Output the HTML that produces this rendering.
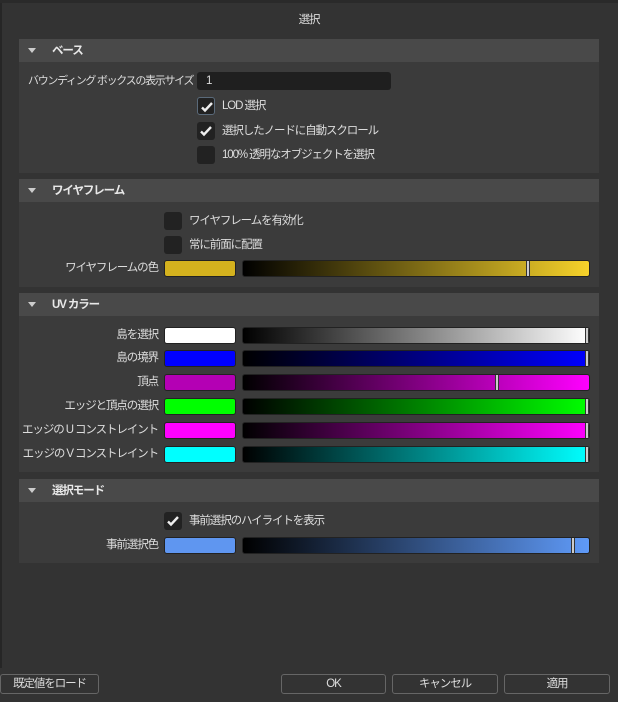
<!DOCTYPE html><html><head><meta charset="utf-8"><style>
*{margin:0;padding:0;box-sizing:border-box}
body{width:618px;height:702px;background:#333;position:relative;overflow:hidden;font-family:"Liberation Sans","Noto Sans CJK JP",sans-serif;font-size:11.5px;letter-spacing:-1.1px;color:#ddd}
.a{position:absolute}
.hd{position:absolute;left:19px;width:580px;background:#494949;height:23px;font-weight:bold;color:#e8e8e8;line-height:24px}
.hd span{position:absolute;left:33px}
.hd i{position:absolute;left:9px;top:9px;width:0;height:0;border-left:4px solid transparent;border-right:4px solid transparent;border-top:5px solid #ccc}
.bd{position:absolute;left:19px;width:580px;background:#3b3b3b}
.cb{position:absolute;width:18px;height:18px;background:#222;border-radius:3px}
.cb svg{position:absolute;left:2px;top:2px}
.lb{position:absolute;line-height:20px;color:#ddd}
.rl{position:absolute;right:460px;text-align:right;line-height:19px;white-space:nowrap}
.sw{position:absolute;left:164px;width:72px;height:17px;border:1px solid #222;border-radius:3px}
.gr{position:absolute;left:242px;width:348px;height:17px;border:1px solid #222;border-radius:3px;overflow:hidden}
.mk{position:absolute;top:0;width:4px;height:15px;background:#ccc;border-left:1px solid #333;border-right:1px solid #333}
.bt{position:absolute;top:674px;height:20px;border:1px solid #666;border-radius:3px;text-align:center;line-height:19px;color:#ddd}
</style></head><body>
<div class="a" style="left:0;top:0;width:618px;height:3px;background:#2a2a2a"></div>
<div class="a" style="left:0;top:3px;width:2px;height:665px;background:#262626"></div>
<div class="a" style="left:0;top:12px;width:618px;text-align:center;line-height:17px">選択</div>

<div class="hd" style="top:39px"><i></i><span>ベース</span></div>
<div class="bd" style="top:62px;height:111px"></div>
<div class="a" style="left:28px;top:72px;line-height:19px;font-size:11px;letter-spacing:-1.3px;white-space:nowrap">バウンディング ボックスの表示サイズ</div>
<div class="a" style="left:197px;top:72px;width:194px;height:18px;background:#1f1f1f;border-radius:3px;padding-left:9px;line-height:19px">1</div>
<div class="cb" style="left:197px;top:97px;border:1px solid #5a6a7a"><svg width="14" height="14" viewBox="0 0 14 14"><path d="M2 7.5l3 3 7-7.5" stroke="#eee" stroke-width="2.4" fill="none"/></svg></div>
<div class="lb" style="left:222px;top:96px">LOD 選択</div>
<div class="cb" style="left:197px;top:122px"><svg width="14" height="14" viewBox="0 0 14 14"><path d="M2 7.5l3 3 7-7.5" stroke="#eee" stroke-width="2.4" fill="none"/></svg></div>
<div class="lb" style="left:222px;top:121px">選択したノードに自動スクロール</div>
<div class="cb" style="left:197px;top:146px"></div>
<div class="lb" style="left:222px;top:145px">100% 透明なオブジェクトを選択</div>

<div class="hd" style="top:179px"><i></i><span>ワイヤフレーム</span></div>
<div class="bd" style="top:202px;height:85px"></div>
<div class="cb" style="left:164px;top:212px"></div>
<div class="lb" style="left:189px;top:211px">ワイヤフレームを有効化</div>
<div class="cb" style="left:164px;top:236px"></div>
<div class="lb" style="left:189px;top:235px">常に前面に配置</div>
<div class="rl" style="top:259px">ワイヤフレームの色</div>
<div class="sw" style="top:260px;background:#d4b21e"></div>
<div class="gr" style="top:260px;background:linear-gradient(90deg,#000,#f6d22a)"><div class="mk" style="left:283px"></div></div>

<div class="hd" style="top:293px"><i></i><span>UV カラー</span></div>
<div class="bd" style="top:316px;height:156px"></div>
<div class="rl" style="top:326px">島を選択</div>
<div class="sw" style="top:327px;background:#fff"></div>
<div class="gr" style="top:327px;background:linear-gradient(90deg,#000,#fff)"><div class="mk" style="left:342px"></div></div>
<div class="rl" style="top:349px">島の境界</div>
<div class="sw" style="top:350px;background:#00f"></div>
<div class="gr" style="top:350px;background:linear-gradient(90deg,#000,#00f)"><div class="mk" style="left:342px"></div></div>
<div class="rl" style="top:373px">頂点</div>
<div class="sw" style="top:374px;background:#b400b4"></div>
<div class="gr" style="top:374px;background:linear-gradient(90deg,#000,#f0f)"><div class="mk" style="left:252px"></div></div>
<div class="rl" style="top:397px">エッジと頂点の選択</div>
<div class="sw" style="top:398px;background:#0f0"></div>
<div class="gr" style="top:398px;background:linear-gradient(90deg,#000,#0f0)"><div class="mk" style="left:342px"></div></div>
<div class="rl" style="top:421px">エッジの U コンストレイント</div>
<div class="sw" style="top:422px;background:#f0f"></div>
<div class="gr" style="top:422px;background:linear-gradient(90deg,#000,#f0f)"><div class="mk" style="left:342px"></div></div>
<div class="rl" style="top:445px">エッジの V コンストレイント</div>
<div class="sw" style="top:446px;background:#0ff"></div>
<div class="gr" style="top:446px;background:linear-gradient(90deg,#000,#0ff)"><div class="mk" style="left:342px"></div></div>

<div class="hd" style="top:479px"><i></i><span>選択モード</span></div>
<div class="bd" style="top:502px;height:61px"></div>
<div class="cb" style="left:164px;top:512px"><svg width="14" height="14" viewBox="0 0 14 14"><path d="M2 7.5l3 3 7-7.5" stroke="#eee" stroke-width="2.4" fill="none"/></svg></div>
<div class="lb" style="left:189px;top:511px">事前選択のハイライトを表示</div>
<div class="rl" style="top:536px">事前選択色</div>
<div class="sw" style="top:537px;background:#5f96f0"></div>
<div class="gr" style="top:537px;background:linear-gradient(90deg,#000,#5f9af8)"><div class="mk" style="left:328px"></div></div>

<div class="bt" style="left:0;width:99px;top:674px">既定値をロード</div>
<div class="bt" style="left:281px;width:105px">OK</div>
<div class="bt" style="left:392px;width:106px">キャンセル</div>
<div class="bt" style="left:504px;width:106px">適用</div>
</body></html>
